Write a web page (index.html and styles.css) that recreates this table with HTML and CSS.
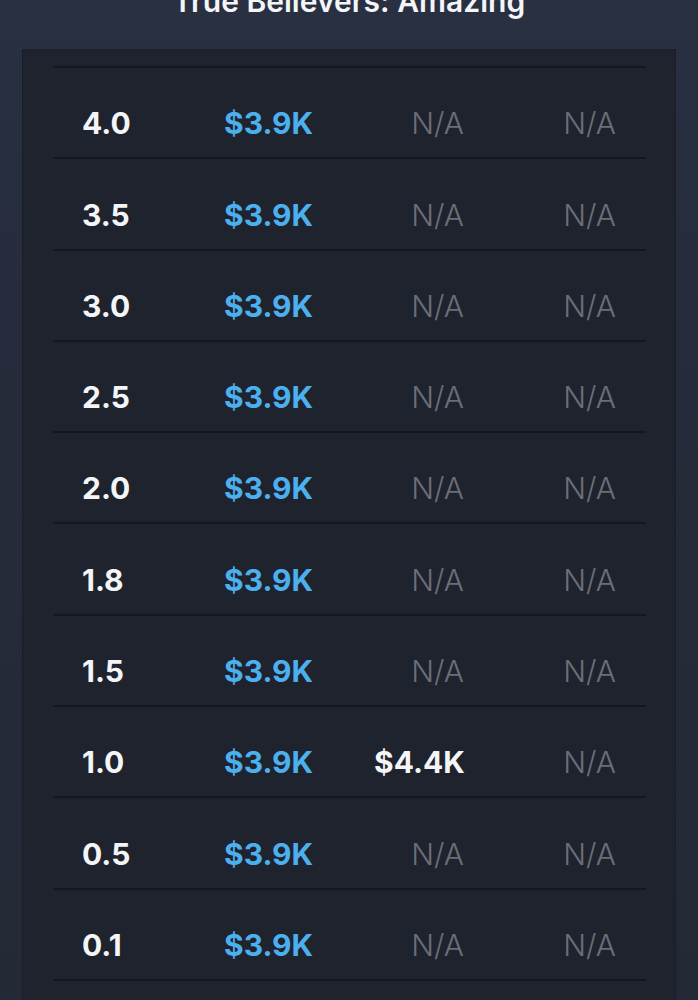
FILE: index.html
```html
<!DOCTYPE html>
<html>
<head>
<meta charset="utf-8">
<link rel="stylesheet" href="styles.css">
</head>
<body>
  <header class="top">
    <h1 class="title">True Believers: Amazing</h1>
  </header>
  <main class="card">
    <div class="rows">
      <div class="row"><span class="grade">4.0</span><span class="price">$3.9K</span><span class="na">N/A</span><span class="na">N/A</span></div>
      <div class="row"><span class="grade">3.5</span><span class="price">$3.9K</span><span class="na">N/A</span><span class="na">N/A</span></div>
      <div class="row"><span class="grade">3.0</span><span class="price">$3.9K</span><span class="na">N/A</span><span class="na">N/A</span></div>
      <div class="row"><span class="grade">2.5</span><span class="price">$3.9K</span><span class="na">N/A</span><span class="na">N/A</span></div>
      <div class="row"><span class="grade">2.0</span><span class="price">$3.9K</span><span class="na">N/A</span><span class="na">N/A</span></div>
      <div class="row"><span class="grade">1.8</span><span class="price">$3.9K</span><span class="na">N/A</span><span class="na">N/A</span></div>
      <div class="row"><span class="grade">1.5</span><span class="price">$3.9K</span><span class="na">N/A</span><span class="na">N/A</span></div>
      <div class="row"><span class="grade">1.0</span><span class="price">$3.9K</span><span class="val">$4.4K</span><span class="na">N/A</span></div>
      <div class="row"><span class="grade">0.5</span><span class="price">$3.9K</span><span class="na">N/A</span><span class="na">N/A</span></div>
      <div class="row"><span class="grade">0.1</span><span class="price">$3.9K</span><span class="na">N/A</span><span class="na">N/A</span></div>
    </div>
  </main>
</body>
</html>
```
FILE: styles.css
```css
html, body {
  margin: 0;
  padding: 0;
}
body {
  width: 698px;
  height: 1000px;
  overflow: hidden;
  background: linear-gradient(180deg, #283042 0%, #262c3b 30%, #242936 100%);
  font-family: Inter, "Liberation Sans", sans-serif;
  color: #f4f5f7;
}
.top {
  display: flow-root;
  height: 49px;
}
.title {
  margin: -14px 0 0;
  font-size: 30px;
  line-height: 30px;
  font-weight: 600;
  text-align: center;
  color: #f4f5f7;
}
.card {
  margin: 0 22px;
  height: 960px;
  background: #1f232d;
  border-left: 1px solid #1a1d25;
  border-right: 1px solid #1a1d25;
  border-top: 1px solid #1c1f28;
  padding: 16px 29px 0 30px;
}
.rows {
  border-top: 2px solid #15171d;
}
.row {
  box-sizing: border-box;
  height: 91.3px;
  border-bottom: 2px solid #15171d;
  display: grid;
  grid-template-columns: 142px 150px 90px 152px;
  align-items: end;
  padding: 0 30px 16px 29px;
  font-size: 30px;
  line-height: 36px;
}
.grade {
  font-weight: 700;
  color: #f4f5f7;
}
.price {
  font-weight: 700;
  color: #4db0ee;
}
.val {
  font-weight: 700;
  color: #f4f5f7;
  text-align: right;
}
.na {
  font-weight: 300;
  color: #6b6e79;
  text-align: right;
}
```
